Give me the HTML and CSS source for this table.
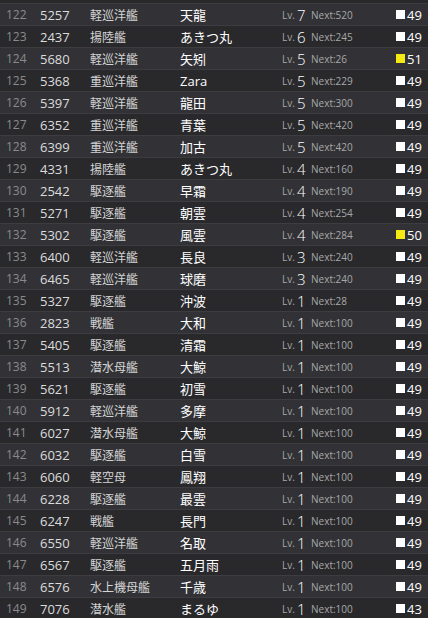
FILE: index.html
```html
<!DOCTYPE html>
<html lang="ja">
<head>
    <meta charset="utf-8">
    <meta name="viewport" content="width=device-width, initial-scale=1.0">
    <title>艦娘一覧</title>
    <link rel="stylesheet" href="styles.css">
</head>
<body>
    <div id="shipList">
        <div class="edge"></div>
        <div class="row"><span class="idx">122</span><span class="sid">5257</span><span class="type">軽巡洋艦</span><span class="name">天龍</span><span class="lv">Lv.</span><span class="lvnum">7</span><span class="next">Next:520</span><span class="cond"><i class="mark"></i>49</span></div>
        <div class="row"><span class="idx">123</span><span class="sid">2437</span><span class="type">揚陸艦</span><span class="name">あきつ丸</span><span class="lv">Lv.</span><span class="lvnum">6</span><span class="next">Next:245</span><span class="cond"><i class="mark"></i>49</span></div>
        <div class="row"><span class="idx">124</span><span class="sid">5680</span><span class="type">軽巡洋艦</span><span class="name">矢矧</span><span class="lv">Lv.</span><span class="lvnum">5</span><span class="next">Next:26</span><span class="cond"><i class="mark sparkle"></i>51</span></div>
        <div class="row"><span class="idx">125</span><span class="sid">5368</span><span class="type">重巡洋艦</span><span class="name">Zara</span><span class="lv">Lv.</span><span class="lvnum">5</span><span class="next">Next:229</span><span class="cond"><i class="mark"></i>49</span></div>
        <div class="row"><span class="idx">126</span><span class="sid">5397</span><span class="type">軽巡洋艦</span><span class="name">龍田</span><span class="lv">Lv.</span><span class="lvnum">5</span><span class="next">Next:300</span><span class="cond"><i class="mark"></i>49</span></div>
        <div class="row"><span class="idx">127</span><span class="sid">6352</span><span class="type">重巡洋艦</span><span class="name">青葉</span><span class="lv">Lv.</span><span class="lvnum">5</span><span class="next">Next:420</span><span class="cond"><i class="mark"></i>49</span></div>
        <div class="row"><span class="idx">128</span><span class="sid">6399</span><span class="type">重巡洋艦</span><span class="name">加古</span><span class="lv">Lv.</span><span class="lvnum">5</span><span class="next">Next:420</span><span class="cond"><i class="mark"></i>49</span></div>
        <div class="row"><span class="idx">129</span><span class="sid">4331</span><span class="type">揚陸艦</span><span class="name">あきつ丸</span><span class="lv">Lv.</span><span class="lvnum">4</span><span class="next">Next:160</span><span class="cond"><i class="mark"></i>49</span></div>
        <div class="row"><span class="idx">130</span><span class="sid">2542</span><span class="type">駆逐艦</span><span class="name">早霜</span><span class="lv">Lv.</span><span class="lvnum">4</span><span class="next">Next:190</span><span class="cond"><i class="mark"></i>49</span></div>
        <div class="row"><span class="idx">131</span><span class="sid">5271</span><span class="type">駆逐艦</span><span class="name">朝雲</span><span class="lv">Lv.</span><span class="lvnum">4</span><span class="next">Next:254</span><span class="cond"><i class="mark"></i>49</span></div>
        <div class="row"><span class="idx">132</span><span class="sid">5302</span><span class="type">駆逐艦</span><span class="name">風雲</span><span class="lv">Lv.</span><span class="lvnum">4</span><span class="next">Next:284</span><span class="cond"><i class="mark sparkle"></i>50</span></div>
        <div class="row"><span class="idx">133</span><span class="sid">6400</span><span class="type">軽巡洋艦</span><span class="name">長良</span><span class="lv">Lv.</span><span class="lvnum">3</span><span class="next">Next:240</span><span class="cond"><i class="mark"></i>49</span></div>
        <div class="row"><span class="idx">134</span><span class="sid">6465</span><span class="type">軽巡洋艦</span><span class="name">球磨</span><span class="lv">Lv.</span><span class="lvnum">3</span><span class="next">Next:240</span><span class="cond"><i class="mark"></i>49</span></div>
        <div class="row"><span class="idx">135</span><span class="sid">5327</span><span class="type">駆逐艦</span><span class="name">沖波</span><span class="lv">Lv.</span><span class="lvnum">1</span><span class="next">Next:28</span><span class="cond"><i class="mark"></i>49</span></div>
        <div class="row"><span class="idx">136</span><span class="sid">2823</span><span class="type">戦艦</span><span class="name">大和</span><span class="lv">Lv.</span><span class="lvnum">1</span><span class="next">Next:100</span><span class="cond"><i class="mark"></i>49</span></div>
        <div class="row"><span class="idx">137</span><span class="sid">5405</span><span class="type">駆逐艦</span><span class="name">清霜</span><span class="lv">Lv.</span><span class="lvnum">1</span><span class="next">Next:100</span><span class="cond"><i class="mark"></i>49</span></div>
        <div class="row"><span class="idx">138</span><span class="sid">5513</span><span class="type">潜水母艦</span><span class="name">大鯨</span><span class="lv">Lv.</span><span class="lvnum">1</span><span class="next">Next:100</span><span class="cond"><i class="mark"></i>49</span></div>
        <div class="row"><span class="idx">139</span><span class="sid">5621</span><span class="type">駆逐艦</span><span class="name">初雪</span><span class="lv">Lv.</span><span class="lvnum">1</span><span class="next">Next:100</span><span class="cond"><i class="mark"></i>49</span></div>
        <div class="row"><span class="idx">140</span><span class="sid">5912</span><span class="type">軽巡洋艦</span><span class="name">多摩</span><span class="lv">Lv.</span><span class="lvnum">1</span><span class="next">Next:100</span><span class="cond"><i class="mark"></i>49</span></div>
        <div class="row"><span class="idx">141</span><span class="sid">6027</span><span class="type">潜水母艦</span><span class="name">大鯨</span><span class="lv">Lv.</span><span class="lvnum">1</span><span class="next">Next:100</span><span class="cond"><i class="mark"></i>49</span></div>
        <div class="row"><span class="idx">142</span><span class="sid">6032</span><span class="type">駆逐艦</span><span class="name">白雪</span><span class="lv">Lv.</span><span class="lvnum">1</span><span class="next">Next:100</span><span class="cond"><i class="mark"></i>49</span></div>
        <div class="row"><span class="idx">143</span><span class="sid">6060</span><span class="type">軽空母</span><span class="name">鳳翔</span><span class="lv">Lv.</span><span class="lvnum">1</span><span class="next">Next:100</span><span class="cond"><i class="mark"></i>49</span></div>
        <div class="row"><span class="idx">144</span><span class="sid">6228</span><span class="type">駆逐艦</span><span class="name">最雲</span><span class="lv">Lv.</span><span class="lvnum">1</span><span class="next">Next:100</span><span class="cond"><i class="mark"></i>49</span></div>
        <div class="row"><span class="idx">145</span><span class="sid">6247</span><span class="type">戦艦</span><span class="name">長門</span><span class="lv">Lv.</span><span class="lvnum">1</span><span class="next">Next:100</span><span class="cond"><i class="mark"></i>49</span></div>
        <div class="row"><span class="idx">146</span><span class="sid">6550</span><span class="type">軽巡洋艦</span><span class="name">名取</span><span class="lv">Lv.</span><span class="lvnum">1</span><span class="next">Next:100</span><span class="cond"><i class="mark"></i>49</span></div>
        <div class="row"><span class="idx">147</span><span class="sid">6567</span><span class="type">駆逐艦</span><span class="name">五月雨</span><span class="lv">Lv.</span><span class="lvnum">1</span><span class="next">Next:100</span><span class="cond"><i class="mark"></i>49</span></div>
        <div class="row"><span class="idx">148</span><span class="sid">6576</span><span class="type">水上機母艦</span><span class="name">千歳</span><span class="lv">Lv.</span><span class="lvnum">1</span><span class="next">Next:100</span><span class="cond"><i class="mark"></i>49</span></div>
        <div class="row"><span class="idx">149</span><span class="sid">7076</span><span class="type">潜水艦</span><span class="name">まるゆ</span><span class="lv">Lv.</span><span class="lvnum">1</span><span class="next">Next:100</span><span class="cond"><i class="mark"></i>43</span></div>
    </div>
</body>
</html>
```

FILE: styles.css
```css
body {
    margin: 0;
    padding: 0;
    background-color: #2b2b2e;
    font-family: "Open Sans", "Noto Sans CJK JP", sans-serif;
    overflow: hidden;
}

#shipList {
    display: flex;
    flex-direction: column;
}

.edge {
    height: 3px;
    background-color: #29292c;
    border-bottom: 1px solid #3d3d41;
}

.row {
    display: flex;
    align-items: center;
    height: 21px;
    border-bottom: 1px solid #3d3d41;
    background-color: #323236;
    white-space: nowrap;
}

.row:nth-child(odd) {
    background-color: #29292c;
}

.idx {
    width: 30px;
    padding-left: 6px;
    box-sizing: border-box;
    font-size: 12px;
    color: #8a8a8e;
}

.sid {
    width: 50px;
    padding-left: 10px;
    box-sizing: border-box;
    font-size: 13px;
    color: #dcdcdc;
}

.type {
    width: 100px;
    padding-left: 10px;
    box-sizing: border-box;
    font-size: 12px;
    color: #d4d4d4;
}

.name {
    width: 102px;
    font-size: 13px;
    color: #ffffff;
}

.lv {
    width: 15px;
    font-size: 10px;
    color: #a8a8a8;
}

.lvnum {
    width: 14px;
    font-size: 15px;
    font-weight: 300;
    color: #ffffff;
}

.next {
    flex: 1;
    font-size: 10px;
    color: #a8a8a8;
}

.cond {
    display: flex;
    align-items: center;
    width: 32px;
    font-size: 13px;
    color: #ffffff;
}

.mark {
    width: 9px;
    height: 9px;
    margin-right: 2px;
    background-color: #ffffff;
}

.mark.sparkle {
    background-color: #f5ea12;
}
```
